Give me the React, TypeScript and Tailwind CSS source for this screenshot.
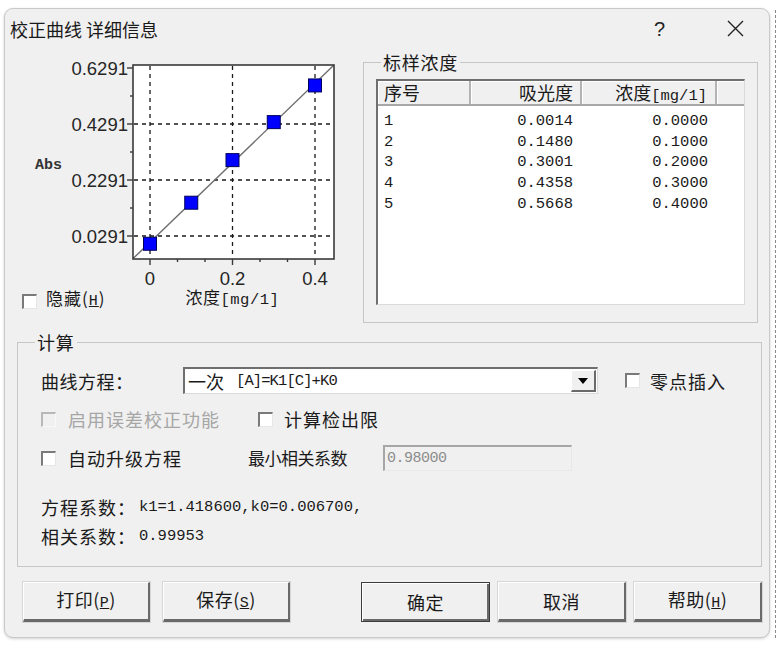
import React from "react";

function Check({ disabled, className }: { disabled?: boolean; className?: string }) {
  return (
    <span
      className={
        disabled
          ? "inline-block w-[15px] h-[15px] shrink-0 bg-[#f0f0f0] border-t-2 border-l-2 border-t-[#b8b8b8] border-l-[#b8b8b8] border-r border-b border-r-[#f8f8f8] border-b-[#f8f8f8] " + (className || "")
          : "inline-block w-[15px] h-[15px] shrink-0 bg-white border-t-2 border-l-2 border-t-[#7a7a7a] border-l-[#7a7a7a] border-r border-b border-r-[#e6e6e6] border-b-[#e6e6e6] " + (className || "")
      }
    />
  );
}

const X = (v: number) => 150 + v * 412.5;
const Y = (a: number) => 236 - (a - 0.0291) * 280;

const points: [number, number][] = [
  [0, 0.0014],
  [0.1, 0.148],
  [0.2, 0.3001],
  [0.3, 0.4358],
  [0.4, 0.5668],
];

function Chart() {
  const yMajors = [0.0291, 0.2291, 0.4291, 0.6291];
  const yMinors = [0.1291, 0.3291, 0.5291];
  const xMinors = [0.0667, 0.1333, 0.2667, 0.3333];
  const lx0 = -0.041;
  const lx1 = 0.446;
  return (
    <svg width={358} height={245} viewBox="5 45 358 245" className="block">
      <rect x={133} y={65} width={201} height={194} fill="#ffffff" stroke="none" />
      {[0.2291, 0.4291, 0.0291].map((v) => (
        <line key={"h" + v} x1={134} x2={333} y1={Y(v)} y2={Y(v)} stroke="#1a1a1a" strokeWidth={1.3} strokeDasharray="4 4" />
      ))}
      {[0, 0.2, 0.4].map((v) => (
        <line key={"v" + v} x1={X(v)} x2={X(v)} y1={66} y2={258} stroke="#1a1a1a" strokeWidth={1.3} strokeDasharray="4 4" />
      ))}
      <line x1={X(lx0)} y1={Y(0.0067 + 1.4186 * lx0)} x2={X(lx1)} y2={Y(0.0067 + 1.4186 * lx1)} stroke="#6e6e6e" strokeWidth={1.4} />
      <rect x={133} y={65} width={201} height={194} fill="none" stroke="#3a3a3a" strokeWidth={1.6} />
      {yMajors.map((v) => (
        <line key={"ym" + v} x1={127} x2={133} y1={Y(v)} y2={Y(v)} stroke="#3a3a3a" strokeWidth={1.4} />
      ))}
      {yMinors.map((v) => (
        <line key={"yn" + v} x1={130} x2={133} y1={Y(v)} y2={Y(v)} stroke="#3a3a3a" strokeWidth={1.4} />
      ))}
      {[0, 0.2, 0.4].map((v) => (
        <line key={"xm" + v} x1={X(v)} x2={X(v)} y1={259} y2={265} stroke="#3a3a3a" strokeWidth={1.4} />
      ))}
      {xMinors.map((v) => (
        <line key={"xn" + v} x1={X(v)} x2={X(v)} y1={259} y2={262} stroke="#3a3a3a" strokeWidth={1.4} />
      ))}
      {points.map(([c, a]) => (
        <rect key={"p" + c} x={X(c) - 6.5} y={Y(a) - 6.5} width={13} height={13} fill="#0000ff" stroke="#00005a" strokeWidth={1} />
      ))}
      {yMajors.map((v) => (
        <text key={"yl" + v} x={128} y={Y(v) + 7} textAnchor="end" fontFamily="'Liberation Sans', Arial, sans-serif" fontSize={18.5} fill="#262626">
          {v.toFixed(4)}
        </text>
      ))}
      {[0, 0.2, 0.4].map((v) => (
        <text key={"xl" + v} x={X(v)} y={285} textAnchor="middle" fontFamily="'Liberation Sans', Arial, sans-serif" fontSize={18.5} fill="#262626">
          {v === 0 ? "0" : v.toFixed(1)}
        </text>
      ))}
      <text x={35} y={169} fontFamily="'Liberation Mono', monospace" fontSize={15} fontWeight={600} fill="#333">
        Abs
      </text>
    </svg>
  );
}

const rows = [
  ["1", "0.0014", "0.0000"],
  ["2", "0.1480", "0.1000"],
  ["3", "0.3001", "0.2000"],
  ["4", "0.4358", "0.3000"],
  ["5", "0.5668", "0.4000"],
];

export default function App() {
  return (
    <div className="w-[780px] h-[655px] bg-white overflow-hidden flex items-start font-['Noto_Sans_CJK_SC',sans-serif] text-[#1a1a1a]">
      <div className="ml-[4px] mt-[8px] w-[766px] h-[630px] shrink-0 bg-[#f0f0f0] rounded-[9px] border border-[#c9c9c9] flex flex-col shadow-[0_1px_3px_rgba(0,0,0,0.18)]">
        {/* title bar */}
        <div className="h-[36px] flex items-center pl-[5px] pt-[3px]">
          <span className="text-[18px] leading-[24px]">校正曲线 详细信息</span>
          <span className="ml-auto mr-[62px] text-[20px] leading-[24px] font-['Liberation_Sans',sans-serif] text-[#222]">?</span>
          <svg width={17} height={17} viewBox="0 0 17 17" className="mr-[25px]">
            <path d="M1 1 L16 16 M16 1 L1 16" stroke="#222" strokeWidth={1.4} fill="none" />
          </svg>
        </div>

        {/* top section */}
        <div className="h-[285px] flex">
          <div className="w-[358px] flex flex-col">
            <Chart />
            <div className="h-[20px] flex items-center">
              <Check className="ml-[17px] mt-[2px]" />
              <span className="ml-[9px] text-[17px] leading-[20px] tracking-[1px]">
                隐藏(<span className="underline font-['Liberation_Mono',monospace] text-[15px]">H</span>)
              </span>
              <span className="ml-[80px] -mt-[4px] text-[17px] leading-[20px] tracking-[0.5px]">
                浓度<span className="font-['Liberation_Mono',monospace] text-[15.5px]">[mg/1]</span>
              </span>
            </div>
          </div>
          <fieldset className="mt-[5px] w-[395px] h-[273px] border border-[#c6c6c6] flex flex-col">
            <legend className="ml-[17px] px-[2px] text-[18px] leading-[24px] tracking-[0.75px]">标样浓度</legend>
            <div className="ml-[12px] mt-[5px] w-[369px] h-[226px] bg-white border-t-2 border-l-2 border-t-[#6f6f6f] border-l-[#6f6f6f] border-r border-b border-r-[#dadada] border-b-[#dadada] flex flex-col overflow-hidden">
              <div className="h-[25px] flex bg-[#f0f0f0] border-b-2 border-b-[#a8a8a8] text-[18px] leading-[22px]">
                <div className="w-[93px] pl-[6px] border-r-2 border-r-[#b4b4b4] shadow-[inset_1px_1px_0_#ffffff]">序号</div>
                <div className="w-[111px] pr-[7px] text-right border-r-2 border-r-[#b4b4b4] shadow-[inset_1px_1px_0_#ffffff]">吸光度</div>
                <div className="w-[135px] pr-[8px] text-right border-r-2 border-r-[#b4b4b4] shadow-[inset_1px_1px_0_#ffffff]">
                  浓度<span className="font-['Liberation_Mono',monospace] text-[15.5px]">[mg/1]</span>
                </div>
                <div className="flex-1 shadow-[inset_1px_1px_0_#ffffff]" />
              </div>
              <div className="pt-[5px] flex flex-col font-['Liberation_Mono',monospace] text-[15.5px]">
                {rows.map((r) => (
                  <div key={r[0]} className="h-[20.6px] flex items-center leading-[20px]">
                    <div className="w-[93px] pl-[6px]">{r[0]}</div>
                    <div className="w-[111px] pr-[9px] text-right">{r[1]}</div>
                    <div className="w-[135px] pr-[9px] text-right">{r[2]}</div>
                  </div>
                ))}
              </div>
            </div>
          </fieldset>
        </div>

        {/* 计算 group */}
        <fieldset className="ml-[12px] w-[745px] h-[237px] border border-[#c6c6c6] flex flex-col text-[18px]">
          <legend className="ml-[17px] px-[2px] text-[18px] leading-[24px] tracking-[0.75px]">计算</legend>

          <div className="mt-[13px] h-[27px] flex items-center">
            <span className="ml-[23px] w-[142px] leading-[24px] tracking-[0.5px]">曲线方程：</span>
            <div className="w-[415px] h-[27px] bg-white border-t-2 border-l-2 border-t-[#6f6f6f] border-l-[#6f6f6f] border-r border-b border-r-[#dadada] border-b-[#dadada] flex items-center">
              <span className="ml-[3px] leading-[22px] text-[18px]">一次</span>
              <span className="ml-[12px] leading-[22px] font-['Liberation_Mono',monospace] text-[15.5px] tracking-[-0.9px]">[A]=K1[C]+K0</span>
              <div className="ml-auto mr-[1px] w-[25px] h-[22px] bg-[#f0f0f0] border-t border-l border-t-[#ffffff] border-l-[#ffffff] border-r-2 border-b-2 border-r-[#6a6a6a] border-b-[#6a6a6a] flex items-center justify-center">
                <svg width={10} height={6} viewBox="0 0 10 6">
                  <path d="M0 0 L10 0 L5 6 Z" fill="#000" />
                </svg>
              </div>
            </div>
            <Check className="ml-[27px]" />
            <span className="ml-[10px] leading-[24px] tracking-[1px]">零点插入</span>
          </div>

          <div className="mt-[12px] h-[26px] flex items-center">
            <div className="ml-[23px] w-[217px] flex items-center">
              <Check disabled />
              <span className="ml-[12px] leading-[24px] tracking-[1px] text-[#a6a6a6]">启用误差校正功能</span>
            </div>
            <Check />
            <span className="ml-[11px] leading-[24px] tracking-[1px]">计算检出限</span>
          </div>

          <div className="mt-[13px] h-[26px] flex items-center">
            <div className="ml-[23px] w-[207px] flex items-center">
              <Check />
              <span className="ml-[12px] leading-[24px] tracking-[1px]">自动升级方程</span>
            </div>
            <span className="w-[135px] leading-[24px] text-[17px] -tracking-[0.5px]">最小相关系数</span>
            <div className="w-[189px] h-[26px] bg-[#f0f0f0] border-t-2 border-l-2 border-t-[#a6a6a6] border-l-[#a6a6a6] border-r border-b border-r-[#e8e8e8] border-b-[#e8e8e8] flex items-center">
              <span className="ml-[2px] font-['Liberation_Mono',monospace] text-[15px] leading-[20px] text-[#8c8c8c] tracking-[-0.5px]">0.98000</span>
            </div>
          </div>

          <div className="mt-[23px] h-[26px] flex items-center">
            <span className="ml-[23px] leading-[24px] tracking-[1px]">方程系数：</span>
            <span className="ml-[3px] font-['Liberation_Mono',monospace] text-[15.5px] leading-[20px]">k1=1.418600,k0=0.006700,</span>
          </div>
          <div className="mt-[3px] h-[26px] flex items-center">
            <span className="ml-[23px] leading-[24px] tracking-[1px]">相关系数：</span>
            <span className="ml-[3px] font-['Liberation_Mono',monospace] text-[15.5px] leading-[20px]">0.99953</span>
          </div>
        </fieldset>

        {/* buttons */}
        <div className="mt-[15px] flex text-[18px]">
          <button className="ml-[18px] w-[127px] h-[40px] bg-[#f0f0f0] border-t border-l border-t-[#ffffff] border-l-[#ffffff] border-r-2 border-b-[3px] border-r-[#6a6a6a] border-b-[#6a6a6a] shadow-[0_0_0_1px_#d6d6d6] leading-[24px] tracking-[0.5px]">
            打印(<span className="underline font-['Liberation_Mono',monospace] text-[15px]">P</span>)
          </button>
          <button className="ml-[13px] w-[127px] h-[40px] bg-[#f0f0f0] border-t border-l border-t-[#ffffff] border-l-[#ffffff] border-r-2 border-b-[3px] border-r-[#6a6a6a] border-b-[#6a6a6a] shadow-[0_0_0_1px_#d6d6d6] leading-[24px] tracking-[0.5px]">
            保存(<span className="underline font-['Liberation_Mono',monospace] text-[15px]">S</span>)
          </button>
          <button className="ml-[71px] w-[129px] h-[40px] bg-[#f0f0f0] border border-[#3c3c3c] shadow-[inset_1px_1px_0_#ffffff,inset_-2px_-2px_0_#6a6a6a] leading-[24px] tracking-[0.5px]">
            确定
          </button>
          <button className="ml-[8px] w-[128px] h-[40px] bg-[#f0f0f0] border-t border-l border-t-[#ffffff] border-l-[#ffffff] border-r-2 border-b-[3px] border-r-[#6a6a6a] border-b-[#6a6a6a] shadow-[0_0_0_1px_#d6d6d6] leading-[24px] tracking-[0.5px]">
            取消
          </button>
          <button className="ml-[8px] w-[128px] h-[40px] bg-[#f0f0f0] border-t border-l border-t-[#ffffff] border-l-[#ffffff] border-r-2 border-b-[3px] border-r-[#6a6a6a] border-b-[#6a6a6a] shadow-[0_0_0_1px_#d6d6d6] leading-[24px] tracking-[0.5px]">
            帮助(<span className="underline font-['Liberation_Mono',monospace] text-[15px]">H</span>)
          </button>
        </div>
      </div>
      <div className="ml-[5px] mt-[10px] h-[628px] border-l border-dashed border-[#8a8a8a]" />
    </div>
  );
}
